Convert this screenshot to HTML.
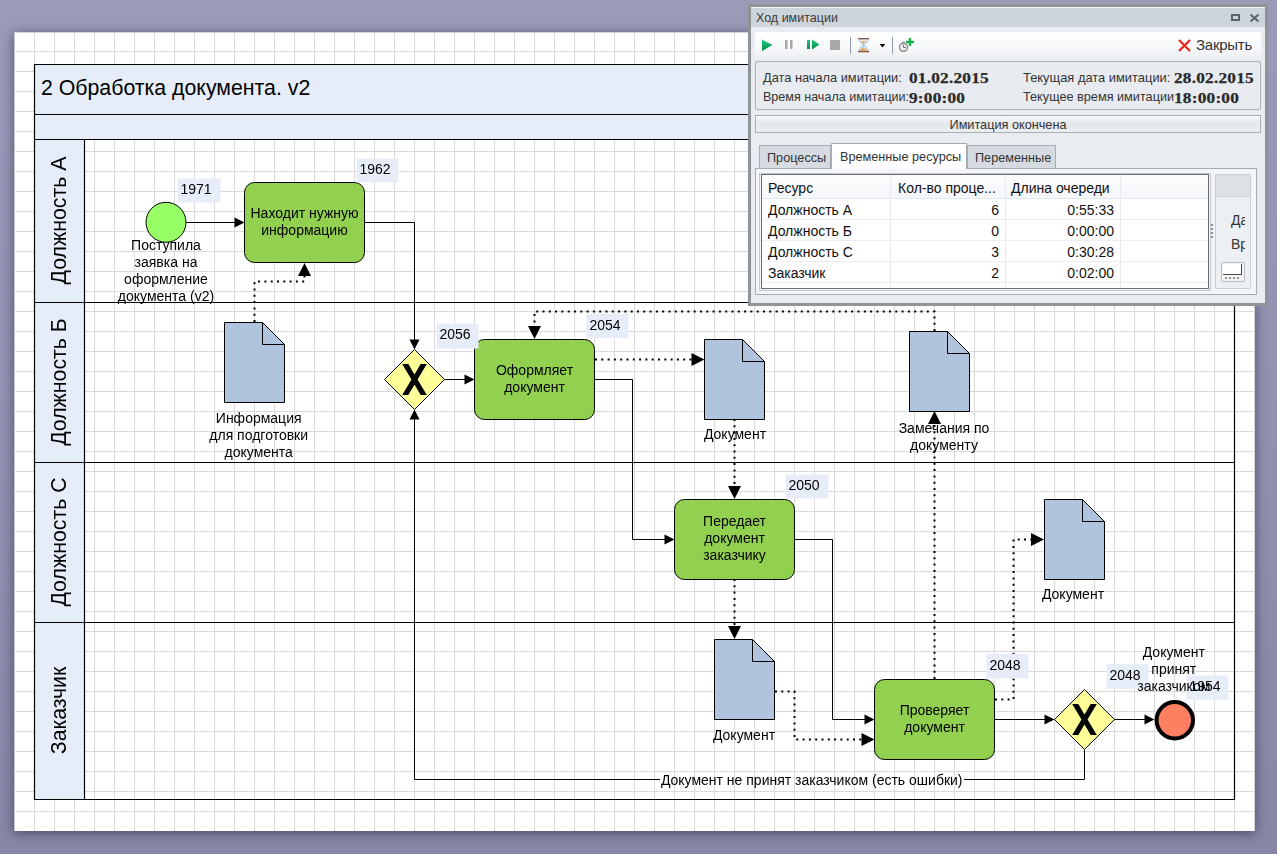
<!DOCTYPE html>
<html><head><meta charset="utf-8"><style>
html,body{margin:0;padding:0;width:1277px;height:854px;overflow:hidden;background:linear-gradient(#9b9bb8,#9291b0 50%,#8886a5);font-family:"Liberation Sans", sans-serif;}
#paper{position:absolute;left:14px;top:32px;width:1241px;height:799px;background:#fff;box-shadow:0 2px 11px rgba(30,30,60,0.6);border-left:1px solid #c9cad6;border-top:1px solid #d2d3de;box-sizing:border-box;}
svg{position:absolute;left:0;top:0;} #dg{opacity:0.999;}
</style></head><body>
<div id="paper"></div>
<svg id="dg" width="1277" height="854" viewBox="0 0 1277 854">
<path d="M34.5 32V831M54.5 32V831M74.5 32V831M94.5 32V831M114.5 32V831M134.5 32V831M154.5 32V831M174.5 32V831M194.5 32V831M214.5 32V831M234.5 32V831M254.5 32V831M274.5 32V831M294.5 32V831M314.5 32V831M334.5 32V831M354.5 32V831M374.5 32V831M394.5 32V831M414.5 32V831M434.5 32V831M454.5 32V831M474.5 32V831M494.5 32V831M514.5 32V831M534.5 32V831M554.5 32V831M574.5 32V831M594.5 32V831M614.5 32V831M634.5 32V831M654.5 32V831M674.5 32V831M694.5 32V831M714.5 32V831M734.5 32V831M754.5 32V831M774.5 32V831M794.5 32V831M814.5 32V831M834.5 32V831M854.5 32V831M874.5 32V831M894.5 32V831M914.5 32V831M934.5 32V831M954.5 32V831M974.5 32V831M994.5 32V831M1014.5 32V831M1034.5 32V831M1054.5 32V831M1074.5 32V831M1094.5 32V831M1114.5 32V831M1134.5 32V831M1154.5 32V831M1174.5 32V831M1194.5 32V831M1214.5 32V831M1234.5 32V831M1254.5 32V831M14 51.5H1255M14 71.5H1255M14 91.5H1255M14 111.5H1255M14 131.5H1255M14 151.5H1255M14 171.5H1255M14 191.5H1255M14 211.5H1255M14 231.5H1255M14 251.5H1255M14 271.5H1255M14 291.5H1255M14 311.5H1255M14 331.5H1255M14 351.5H1255M14 371.5H1255M14 391.5H1255M14 411.5H1255M14 431.5H1255M14 451.5H1255M14 471.5H1255M14 491.5H1255M14 511.5H1255M14 531.5H1255M14 551.5H1255M14 571.5H1255M14 591.5H1255M14 611.5H1255M14 631.5H1255M14 651.5H1255M14 671.5H1255M14 691.5H1255M14 711.5H1255M14 731.5H1255M14 751.5H1255M14 771.5H1255M14 791.5H1255M14 811.5H1255" stroke="#dadada" stroke-width="1" fill="none"/>
<rect x="34.5" y="64.5" width="1200" height="74.5" fill="#e7edf8"/>
<rect x="34.5" y="139" width="50" height="660" fill="#e7edf8"/>
<path d="M34.5 64.5H1234.5V799.5H34.5ZM34.5 114.5H1234.5M34.5 139.5H1234.5M84.5 139.5V799.5M34.5 302.5H1234.5M34.5 462.5H1234.5M34.5 622.5H1234.5" stroke="#000" stroke-width="1.2" fill="none"/>
<text x="41" y="95.3" transform="rotate(0.01 41 95)" font-size="21.3" font-family='"Liberation Sans", sans-serif'>2 Обработка документа. v2</text>
<text transform="translate(66 220.5) rotate(-90)" text-anchor="middle" font-size="21.3" font-family='"Liberation Sans", sans-serif'>Должность А</text>
<text transform="translate(66 382) rotate(-90)" text-anchor="middle" font-size="21.3" font-family='"Liberation Sans", sans-serif'>Должность Б</text>
<text transform="translate(66 542) rotate(-90)" text-anchor="middle" font-size="21.3" font-family='"Liberation Sans", sans-serif'>Должность С</text>
<text transform="translate(66 710.5) rotate(-90)" text-anchor="middle" font-size="21.3" font-family='"Liberation Sans", sans-serif'>Заказчик</text>
<path d="M186 222.5H236M364.5 222.5H414.5V340M444.5 379.5H466M594.5 379.5H632.5V539.5H666M794.5 539.5H832.5V719.5H866M994.5 719.5H1046M1114.5 719.5H1146M1084.5 749.5V779.5H964M660 779.5H414.5V419" stroke="#000" stroke-width="1" fill="none"/>
<polygon points="244.5,222.5 234.5,217.5 234.5,227.5" fill="#000"/>
<polygon points="414.5,349.5 409.5,339.5 419.5,339.5" fill="#000"/>
<polygon points="474.5,379.5 464.5,374.5 464.5,384.5" fill="#000"/>
<polygon points="674.5,539.5 664.5,534.5 664.5,544.5" fill="#000"/>
<polygon points="874.5,719.5 864.5,714.5 864.5,724.5" fill="#000"/>
<polygon points="1054.5,719.5 1044.5,714.5 1044.5,724.5" fill="#000"/>
<polygon points="1154.5,719.5 1144.5,714.5 1144.5,724.5" fill="#000"/>
<polygon points="414.5,409.5 409.5,419.5 419.5,419.5" fill="#000"/>
<path d="M254.5 322V281.5H304.5V276M595 359.5H692M934.5 331V311.5H534.5V326M734.5 419V486M734.5 579V626M775 691.5H794.5V739.5H862M934.5 679V424M995 699.5H1013.5V539.5H1031" stroke="#000" stroke-width="2" stroke-dasharray="2 4.3" fill="none"/>
<polygon points="304.5,263 298.0,276 311.0,276" fill="#000"/>
<polygon points="704.5,359.5 691.5,353.0 691.5,366.0" fill="#000"/>
<polygon points="534.5,339 528.0,326 541.0,326" fill="#000"/>
<polygon points="734.5,499 728.0,486 741.0,486" fill="#000"/>
<polygon points="734.5,639 728.0,626 741.0,626" fill="#000"/>
<polygon points="874.5,739.5 861.5,733.0 861.5,746.0" fill="#000"/>
<polygon points="934.5,411 928.0,424 941.0,424" fill="#000"/>
<polygon points="1044,539.5 1031,533.0 1031,546.0" fill="#000"/>
<rect x="244.5" y="182.5" width="120" height="80" rx="10" fill="#92d050" stroke="#000" stroke-width="1"/>
<text x="304.5" y="217.8" text-anchor="middle" font-size="14" font-family='"Liberation Sans", sans-serif'>Находит нужную</text>
<text x="304.5" y="234.8" text-anchor="middle" font-size="14" font-family='"Liberation Sans", sans-serif'>информацию</text>
<rect x="474.5" y="339.5" width="120" height="80" rx="10" fill="#92d050" stroke="#000" stroke-width="1"/>
<text x="534.5" y="374.8" text-anchor="middle" font-size="14" font-family='"Liberation Sans", sans-serif'>Оформляет</text>
<text x="534.5" y="391.8" text-anchor="middle" font-size="14" font-family='"Liberation Sans", sans-serif'>документ</text>
<rect x="674.5" y="499.5" width="120" height="80" rx="10" fill="#92d050" stroke="#000" stroke-width="1"/>
<text x="734.5" y="526.3" text-anchor="middle" font-size="14" font-family='"Liberation Sans", sans-serif'>Передает</text>
<text x="734.5" y="543.3" text-anchor="middle" font-size="14" font-family='"Liberation Sans", sans-serif'>документ</text>
<text x="734.5" y="560.3" text-anchor="middle" font-size="14" font-family='"Liberation Sans", sans-serif'>заказчику</text>
<rect x="874.5" y="679.5" width="120" height="80" rx="10" fill="#92d050" stroke="#000" stroke-width="1"/>
<text x="934.5" y="714.8" text-anchor="middle" font-size="14" font-family='"Liberation Sans", sans-serif'>Проверяет</text>
<text x="934.5" y="731.8" text-anchor="middle" font-size="14" font-family='"Liberation Sans", sans-serif'>документ</text>
<path d="M224.5 322.5H262.5L284.5 344.5V402.5H224.5Z" fill="#b0c4de" stroke="#000" stroke-width="1"/>
<path d="M262.5 322.5V344.5H284.5" fill="none" stroke="#000" stroke-width="1"/>
<path d="M704.5 339.5H742.5L764.5 361.5V419.5H704.5Z" fill="#b0c4de" stroke="#000" stroke-width="1"/>
<path d="M742.5 339.5V361.5H764.5" fill="none" stroke="#000" stroke-width="1"/>
<path d="M909.5 331.5H947.5L969.5 353.5V411.5H909.5Z" fill="#b0c4de" stroke="#000" stroke-width="1"/>
<path d="M947.5 331.5V353.5H969.5" fill="none" stroke="#000" stroke-width="1"/>
<path d="M1044.5 499.5H1082.5L1104.5 521.5V579.5H1044.5Z" fill="#b0c4de" stroke="#000" stroke-width="1"/>
<path d="M1082.5 499.5V521.5H1104.5" fill="none" stroke="#000" stroke-width="1"/>
<path d="M714.5 639.5H752.5L774.5 661.5V719.5H714.5Z" fill="#b0c4de" stroke="#000" stroke-width="1"/>
<path d="M752.5 639.5V661.5H774.5" fill="none" stroke="#000" stroke-width="1"/>
<path d="M384.5 379.5L414.5 349.5L444.5 379.5L414.5 409.5Z" fill="#ffff99" stroke="#000" stroke-width="1"/>
<polygon points="402.20,364.00 408.30,364.00 414.50,374.40 420.70,364.00 426.80,364.00 417.55,379.50 426.80,395.00 420.70,395.00 414.50,384.60 408.30,395.00 402.20,395.00 411.45,379.50" fill="#000"/>
<path d="M1054.5 719.5L1084.5 689.5L1114.5 719.5L1084.5 749.5Z" fill="#ffff99" stroke="#000" stroke-width="1"/>
<polygon points="1072.20,704.00 1078.30,704.00 1084.50,714.40 1090.70,704.00 1096.80,704.00 1087.55,719.50 1096.80,735.00 1090.70,735.00 1084.50,724.60 1078.30,735.00 1072.20,735.00 1081.45,719.50" fill="#000"/>
<circle cx="166" cy="222.3" r="20" fill="#99ff66" stroke="#000" stroke-width="1"/>
<circle cx="1174.8" cy="720.3" r="18.2" fill="#ff8060" stroke="#000" stroke-width="4"/>
<rect x="177.5" y="178.5" width="43" height="24" fill="#e7edf8"/>
<text x="180.5" y="194.3" font-size="14" font-family='"Liberation Sans", sans-serif'>1971</text>
<rect x="356.5" y="158.5" width="42" height="24" fill="#e7edf8"/>
<text x="359.5" y="174.3" font-size="14" font-family='"Liberation Sans", sans-serif'>1962</text>
<rect x="436.5" y="323.5" width="42" height="25" fill="#e7edf8"/>
<text x="439.5" y="339.3" font-size="14" font-family='"Liberation Sans", sans-serif'>2056</text>
<rect x="586.5" y="314.0" width="42" height="24.100000000000023" fill="#e7edf8"/>
<text x="589.5" y="329.8" font-size="14" font-family='"Liberation Sans", sans-serif'>2054</text>
<rect x="785.5" y="474.5" width="43" height="24" fill="#e7edf8"/>
<text x="788.5" y="490.3" font-size="14" font-family='"Liberation Sans", sans-serif'>2050</text>
<rect x="986.5" y="653.9" width="42" height="24.800000000000068" fill="#e7edf8"/>
<text x="989.5" y="669.6999999999999" font-size="14" font-family='"Liberation Sans", sans-serif'>2048</text>
<rect x="1106.5" y="664.1" width="42" height="24.799999999999955" fill="#e7edf8"/>
<text x="1109.5" y="679.9" font-size="14" font-family='"Liberation Sans", sans-serif'>2048</text>
<rect x="1186.5" y="675.3" width="42" height="24.40000000000009" fill="#e7edf8"/>
<text x="1189.5" y="691.0999999999999" font-size="14" font-family='"Liberation Sans", sans-serif'>1954</text>
<text x="811.7" y="784.5" text-anchor="middle" font-size="14" font-family='"Liberation Sans", sans-serif'>Документ не принят заказчиком (есть ошибки)</text>
<text x="166" y="249.5" text-anchor="middle" font-size="14" font-family='"Liberation Sans", sans-serif'>Поступила</text>
<text x="166" y="266.5" text-anchor="middle" font-size="14" font-family='"Liberation Sans", sans-serif'>заявка на</text>
<text x="166" y="283.5" text-anchor="middle" font-size="14" font-family='"Liberation Sans", sans-serif'>оформление</text>
<text x="166" y="300.5" text-anchor="middle" font-size="14" font-family='"Liberation Sans", sans-serif'>документа (v2)</text>
<text x="258.7" y="422.5" text-anchor="middle" font-size="14" font-family='"Liberation Sans", sans-serif'>Информация</text>
<text x="258.7" y="439.5" text-anchor="middle" font-size="14" font-family='"Liberation Sans", sans-serif'>для подготовки</text>
<text x="258.7" y="456.5" text-anchor="middle" font-size="14" font-family='"Liberation Sans", sans-serif'>документа</text>
<text x="735" y="439" text-anchor="middle" font-size="14" font-family='"Liberation Sans", sans-serif'>Документ</text>
<text x="944" y="433" text-anchor="middle" font-size="14" font-family='"Liberation Sans", sans-serif'>Замечания по</text>
<text x="944" y="450" text-anchor="middle" font-size="14" font-family='"Liberation Sans", sans-serif'>документу</text>
<text x="1073" y="599" text-anchor="middle" font-size="14" font-family='"Liberation Sans", sans-serif'>Документ</text>
<text x="744" y="739.5" text-anchor="middle" font-size="14" font-family='"Liberation Sans", sans-serif'>Документ</text>
<text x="1173.8" y="657" text-anchor="middle" font-size="14" font-family='"Liberation Sans", sans-serif'>Документ</text>
<text x="1173.8" y="674" text-anchor="middle" font-size="14" font-family='"Liberation Sans", sans-serif'>принят</text>
<text x="1173.8" y="691" text-anchor="middle" font-size="14" font-family='"Liberation Sans", sans-serif'>заказчиком</text>
</svg>
<div id="win" style="position:absolute;left:748px;top:4px;width:514px;height:296px;border:3px solid #8e9498;background:#e9ecf1;font-family:'Liberation Sans',sans-serif;color:#333;overflow:hidden;">
 <div style="position:absolute;left:0;top:0;width:514px;height:20px;background:#cdd4dc;border-top:1px solid #f4f6f8;box-sizing:border-box;"></div>
 <div style="position:absolute;left:5px;top:4px;font-size:12.5px;line-height:15px;color:#3a3a3a;">Ход имитации</div>
 <!-- maximize -->
 <div style="position:absolute;left:480px;top:7px;width:9px;height:7px;box-sizing:border-box;border:2px solid #5f6368;border-top-width:2.5px;"></div>
 <svg style="position:absolute;left:498px;top:6px" width="11" height="10"><path d="M1.5 1.5L9.5 8.5M9.5 1.5L1.5 8.5" stroke="#5f6368" stroke-width="2"/></svg>
 <!-- toolbar -->
 <div style="position:absolute;left:4px;top:25px;width:506px;height:27px;border-radius:3px;background:linear-gradient(#ffffff,#f9fafb 50%,#eceff3);"></div>
 <svg style="position:absolute;left:-3px;top:-3px;" width="514" height="60">
  <defs>
   <linearGradient id="gp" x1="0" y1="0" x2="0" y2="1"><stop offset="0" stop-color="#1fcf80"/><stop offset="1" stop-color="#06874a"/></linearGradient>
   <linearGradient id="hg" x1="0" y1="0" x2="1" y2="0"><stop offset="0" stop-color="#7fb3e6"/><stop offset="0.5" stop-color="#f4b24a"/><stop offset="1" stop-color="#7fb3e6"/></linearGradient>
  </defs>
  <path d="M14 35.5L24.5 41L14 47Z" fill="url(#gp)"/>
  <rect x="37" y="36" width="2.5" height="9" fill="#a9a9a9"/><rect x="42" y="36" width="2.5" height="9" fill="#a9a9a9"/>
  <rect x="59" y="36" width="3" height="9" fill="url(#gp)"/><path d="M64 35.5L71.5 40.5L64 45.5Z" fill="url(#gp)"/>
  <rect x="82" y="36" width="10" height="10" fill="#a9a9a9"/>
  <rect x="102" y="33" width="1" height="17" fill="#8a9ab0"/>
  <rect x="110" y="33.9" width="11.2" height="1.5" rx="0.7" fill="#9a4a0c"/><rect x="110" y="46.8" width="11.2" height="1.5" rx="0.7" fill="#8a3a0c"/>
  <path d="M111.5 35.3C111.5 38.8 114.6 40.3 115.5 41C114.6 41.7 111.5 43.2 111.5 46.8H119.5C119.5 43.2 116.4 41.7 115.5 41C116.4 40.3 119.5 38.8 119.5 35.3Z" fill="#eaf4ff" stroke="#7fb0ea" stroke-width="0.9"/><path d="M113 37H118L115.5 40Z" fill="#f6a43c"/><rect x="115.1" y="39" width="0.9" height="6.5" fill="#f1b45a"/><path d="M112.3 46.6H118.7L117.2 44.2H113.8Z" fill="#f59d38"/>
  <path d="M131.5 40H137.5L134.5 43.5Z" fill="#111"/>
  <rect x="144" y="33" width="1" height="17" fill="#8a9ab0"/>
  <circle cx="155.5" cy="43.3" r="4" fill="#f4f4f4" stroke="#8b8b8b" stroke-width="1.5"/>
  <path d="M155.5 40.8V43.4H157.8" stroke="#6b6b6b" stroke-width="1" fill="none"/>
  <rect x="154" y="37.6" width="3" height="1.1" fill="#8b8b8b"/>
  <path d="M162 34V42M158 38H166" stroke="#16b34a" stroke-width="2.4"/>
  <path d="M431 36L442 47M442 36L431 47" stroke="#e8261c" stroke-width="2.3"/>
 </svg>
 <div style="position:absolute;left:445px;top:29px;font-size:15px;letter-spacing:-0.25px;line-height:17px;color:#333;">Закрыть</div>
 <!-- info panel -->
 <div style="position:absolute;left:4px;top:54px;width:506px;height:49px;box-sizing:border-box;border:1px solid #adb2b8;border-radius:2px;background:#e8ebf0;"></div>
 <div style="position:absolute;left:12px;top:63px;font-size:12.8px;line-height:15px;">Дата начала имитации:</div>
 <div style="position:absolute;left:12px;top:83px;font-size:12.55px;line-height:15px;">Время начала имитации:</div>
 <div style="position:absolute;left:272px;top:63px;font-size:12.9px;line-height:15px;">Текущая дата имитации:</div>
 <div style="position:absolute;left:272px;top:83px;font-size:12.7px;line-height:15px;">Текущее время имитации</div>
 <div style="position:absolute;left:158px;top:62px;font-family:'Liberation Serif',serif;font-weight:bold;font-size:15px;letter-spacing:0.2px;line-height:18px;color:#2a2a2a;transform:scaleX(1.15);transform-origin:0 0;-webkit-text-stroke:0.25px #2a2a2a;white-space:nowrap;">01.02.2015</div>
 <div style="position:absolute;left:158px;top:82px;font-family:'Liberation Serif',serif;font-weight:bold;font-size:15px;letter-spacing:0.2px;line-height:18px;color:#2a2a2a;transform:scaleX(1.15);transform-origin:0 0;-webkit-text-stroke:0.25px #2a2a2a;white-space:nowrap;">9:00:00</div>
 <div style="position:absolute;left:423px;top:62px;font-family:'Liberation Serif',serif;font-weight:bold;font-size:15px;letter-spacing:0.2px;line-height:18px;color:#2a2a2a;transform:scaleX(1.15);transform-origin:0 0;-webkit-text-stroke:0.25px #2a2a2a;white-space:nowrap;">28.02.2015</div>
 <div style="position:absolute;left:423px;top:82px;font-family:'Liberation Serif',serif;font-weight:bold;font-size:15px;letter-spacing:0.2px;line-height:18px;color:#2a2a2a;transform:scaleX(1.15);transform-origin:0 0;-webkit-text-stroke:0.25px #2a2a2a;white-space:nowrap;">18:00:00</div>
 <!-- status -->
 <div style="position:absolute;left:4px;top:108px;width:506px;height:18px;box-sizing:border-box;border:1px solid #a9aeb4;background:linear-gradient(#f6f7f9,#e3e6ea 55%,#edf0f2);"></div>
 <div style="position:absolute;left:4px;top:111px;width:506px;text-align:center;font-size:12.7px;line-height:15px;">Имитация окончена</div>
 <!-- tabs -->
 <div style="position:absolute;left:8px;top:138px;width:72px;height:23px;box-sizing:border-box;border:1px solid #a7acb2;border-bottom:none;background:#d6dbe1;"></div>
 <div style="position:absolute;left:216px;top:138px;width:89px;height:23px;box-sizing:border-box;border:1px solid #a7acb2;border-bottom:none;background:#d6dbe1;"></div>
 <div style="position:absolute;left:4px;top:161px;width:502px;height:127px;box-sizing:border-box;border:1px solid #a7acb2;background:#f3f5f8;"></div>
 <div style="position:absolute;left:80px;top:136px;width:136px;height:26px;box-sizing:border-box;border:1px solid #a7acb2;border-bottom:none;background:#fff;"></div>
 <div style="position:absolute;left:16px;top:144px;font-size:12.7px;line-height:15px;">Процессы</div>
 <div style="position:absolute;left:89px;top:143px;font-size:12.7px;line-height:15px;">Временные ресурсы</div>
 <div style="position:absolute;left:224px;top:144px;font-size:12.7px;line-height:15px;">Переменные</div>
 <!-- grid -->
 <div style="position:absolute;left:8px;top:166px;width:452px;height:118px;box-sizing:border-box;border:1px solid #c4c9cf;"></div>
 <div style="position:absolute;left:10px;top:167px;width:448px;height:115px;box-sizing:border-box;border:1px solid #6a6e73;background:#fff;overflow:hidden;">
  <div style="position:absolute;left:0;top:0;width:448px;height:23px;background:linear-gradient(#fbfcfd,#f5f7fa);border-bottom:1px solid #e3e9f2;"></div>
  <div style="position:absolute;left:128px;top:0;width:1px;height:117px;background:#e6ebf2;"></div>
  <div style="position:absolute;left:243px;top:0;width:1px;height:117px;background:#e6ebf2;"></div>
  <div style="position:absolute;left:358px;top:0;width:1px;height:117px;background:#e6ebf2;"></div>
  <div style="position:absolute;left:0;top:44px;width:448px;height:1px;background:#eceef1;"></div>
  <div style="position:absolute;left:0;top:65px;width:448px;height:1px;background:#eceef1;"></div>
  <div style="position:absolute;left:0;top:86px;width:448px;height:1px;background:#eceef1;"></div>
  <div style="position:absolute;left:0;top:107px;width:448px;height:1px;background:#eceef1;"></div>
  <div style="position:absolute;left:6px;top:5px;font-size:14px;line-height:16px;color:#111;">Ресурс</div>
  <div style="position:absolute;left:136px;top:5px;font-size:14px;line-height:16px;color:#111;">Кол-во проце...</div>
  <div style="position:absolute;left:249px;top:5px;font-size:14px;line-height:16px;color:#111;">Длина очереди</div>
  <div style="position:absolute;left:6px;top:27px;font-size:14px;line-height:16px;color:#111;">Должность А</div>
  <div style="position:absolute;left:6px;top:48px;font-size:14px;line-height:16px;color:#111;">Должность Б</div>
  <div style="position:absolute;left:6px;top:69px;font-size:14px;line-height:16px;color:#111;">Должность С</div>
  <div style="position:absolute;left:6px;top:90px;font-size:14px;line-height:16px;color:#111;">Заказчик</div>
  <div style="position:absolute;left:128px;top:27px;width:109px;text-align:right;font-size:14px;line-height:16px;color:#111;">6</div>
  <div style="position:absolute;left:128px;top:48px;width:109px;text-align:right;font-size:14px;line-height:16px;color:#111;">0</div>
  <div style="position:absolute;left:128px;top:69px;width:109px;text-align:right;font-size:14px;line-height:16px;color:#111;">3</div>
  <div style="position:absolute;left:128px;top:90px;width:109px;text-align:right;font-size:14px;line-height:16px;color:#111;">2</div>
  <div style="position:absolute;left:243px;top:27px;width:109px;text-align:right;font-size:14px;line-height:16px;color:#111;">0:55:33</div>
  <div style="position:absolute;left:243px;top:48px;width:109px;text-align:right;font-size:14px;line-height:16px;color:#111;">0:00:00</div>
  <div style="position:absolute;left:243px;top:69px;width:109px;text-align:right;font-size:14px;line-height:16px;color:#111;">0:30:28</div>
  <div style="position:absolute;left:243px;top:90px;width:109px;text-align:right;font-size:14px;line-height:16px;color:#111;">0:02:00</div>
 </div>
 <!-- splitter dots -->
 <div style="position:absolute;left:460px;top:217px;width:2px;height:2px;background:#8d939a;"></div>
 <div style="position:absolute;left:460px;top:221px;width:2px;height:2px;background:#8d939a;"></div>
 <div style="position:absolute;left:460px;top:225px;width:2px;height:2px;background:#8d939a;"></div>
 <div style="position:absolute;left:460px;top:229px;width:2px;height:2px;background:#8d939a;"></div>
 <!-- right panel -->
 <div style="position:absolute;left:464px;top:167px;width:36px;height:115px;box-sizing:border-box;border:1px solid #c9ced4;border-radius:2px;background:#edf0f3;overflow:hidden;">
  <div style="position:absolute;left:0;top:0;width:36px;height:21px;background:#dde1e6;border-bottom:1px solid #cdd2d8;"></div>
  <div style="position:absolute;left:15px;top:37px;font-size:14px;line-height:16px;white-space:nowrap;color:#333;">Дата</div>
  <div style="position:absolute;left:15px;top:61px;font-size:14px;line-height:16px;white-space:nowrap;color:#333;">Время</div>
  <div style="position:absolute;left:29px;top:22px;width:7px;height:92px;background:#edf0f3;"></div>
  <div style="position:absolute;left:5px;top:87px;width:24px;height:20px;box-sizing:border-box;border:1px solid #b8bdc3;border-radius:2px;background:#f4f5f7;"></div>
  <div style="position:absolute;left:7px;top:89px;width:19px;height:11px;box-sizing:border-box;border-right:1px solid #444;border-bottom:1px solid #444;background:#fff;"></div>
  <div style="position:absolute;left:9px;top:102px;width:2px;height:2px;background:#8d939a;"></div>
  <div style="position:absolute;left:13px;top:102px;width:2px;height:2px;background:#8d939a;"></div>
  <div style="position:absolute;left:17px;top:102px;width:2px;height:2px;background:#8d939a;"></div>
  <div style="position:absolute;left:21px;top:102px;width:2px;height:2px;background:#8d939a;"></div>
 </div>
</div>

</body></html>
